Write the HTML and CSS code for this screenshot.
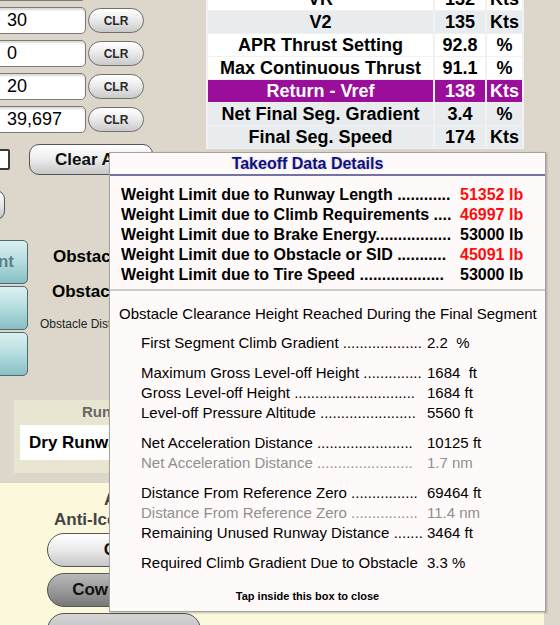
FILE: index.html
```html
<!DOCTYPE html>
<html lang="en">
<head>
    <meta charset="UTF-8">
    <meta name="viewport" content="width=device-width, initial-scale=1.0">
    <title>Takeoff Data</title>
    <link rel="stylesheet" href="styles.css">
</head>
<body>
    <div class="page">
        <div class="form">
            <div class="left">
                <div class="entry"><input class="field" value="5,200"><button class="clr">CLR</button></div>
                <div class="entry"><input class="field" value="30"><button class="clr">CLR</button></div>
                <div class="entry"><input class="field" value="0"><button class="clr">CLR</button></div>
                <div class="entry"><input class="field" value="20"><button class="clr">CLR</button></div>
                <div class="entry"><input class="field" value="39,697"><button class="clr">CLR</button></div>

                <div class="clear-row">
                    <span class="check"></span>
                    <button class="clear-all">Clear All</button>
                </div>

                <button class="stub"></button>

                <div class="obst">
                    <div class="teal-col">
                        <button class="teal">Segment</button>
                        <button class="teal"></button>
                        <button class="teal"></button>
                    </div>
                    <div class="obst-labels">
                        <div class="obst-big">Obstacle Height</div>
                        <div class="obst-big second">Obstacle Distance</div>
                        <div class="obst-small">Obstacle Distance from Runway End</div>
                    </div>
                </div>

                <div class="runway">
                    <div class="runway-label">Runway Condition</div>
                    <div class="runway-field">Dry Runway</div>
                </div>
            </div>

            <table class="perf">
                <colgroup>
                    <col class="c-label">
                    <col class="c-value">
                    <col class="c-unit">
                </colgroup>
                <tr class="light"><td>VR</td><td>132</td><td>Kts</td></tr>
                <tr class="gray"><td>V2</td><td>135</td><td>Kts</td></tr>
                <tr class="light"><td>APR Thrust Setting</td><td>92.8</td><td>%</td></tr>
                <tr class="light"><td>Max Continuous Thrust</td><td>91.1</td><td>%</td></tr>
                <tr class="hilite"><td>Return - Vref</td><td>138</td><td>Kts</td></tr>
                <tr class="gray"><td>Net Final Seg. Gradient</td><td>3.4</td><td>%</td></tr>
                <tr class="gray"><td>Final Seg. Speed</td><td>174</td><td>Kts</td></tr>
            </table>
        </div>

        <div class="anti-ice">
            <div class="ai-heading">Anti-Ice Settings</div>
            <div class="ai-label">Anti-Ice</div>
            <button class="pill">Cowl</button>
            <button class="pill on">Cowl &amp; Wing</button>
            <button class="pill dim"></button>
        </div>

        <div class="details">
            <div class="details-title">Takeoff Data Details</div>

            <div class="limits">
                <div class="limit"><span class="l-name">Weight Limit due to Runway Length ............</span><span class="l-val over">51352 lb</span></div>
                <div class="limit"><span class="l-name">Weight Limit due to Climb Requirements ....</span><span class="l-val over">46997 lb</span></div>
                <div class="limit"><span class="l-name">Weight Limit due to Brake Energy.................</span><span class="l-val">53000 lb</span></div>
                <div class="limit"><span class="l-name">Weight Limit due to Obstacle or SID ...........</span><span class="l-val over">45091 lb</span></div>
                <div class="limit"><span class="l-name">Weight Limit due to Tire Speed ...................</span><span class="l-val">53000 lb</span></div>
            </div>

            <div class="segment">
                <div class="seg-title">Obstacle Clearance Height Reached During the Final Segment</div>

                <div class="group">
                    <div class="item"><span class="i-name">First Segment Climb Gradient ...................</span><span class="i-val">2.2&nbsp; %</span></div>
                </div>
                <div class="group">
                    <div class="item"><span class="i-name">Maximum Gross Level-off Height ..............</span><span class="i-val">1684&nbsp; ft</span></div>
                    <div class="item"><span class="i-name">Gross Level-off Height .............................</span><span class="i-val">1684 ft</span></div>
                    <div class="item"><span class="i-name">Level-off Pressure Altitude .......................</span><span class="i-val">5560 ft</span></div>
                </div>
                <div class="group">
                    <div class="item"><span class="i-name">Net Acceleration Distance .......................</span><span class="i-val">10125 ft</span></div>
                    <div class="item faded"><span class="i-name">Net Acceleration Distance .......................</span><span class="i-val">1.7 nm</span></div>
                </div>
                <div class="group">
                    <div class="item"><span class="i-name">Distance From Reference Zero ................</span><span class="i-val">69464 ft</span></div>
                    <div class="item faded"><span class="i-name">Distance From Reference Zero ................</span><span class="i-val">11.4 nm</span></div>
                    <div class="item"><span class="i-name">Remaining Unused Runway Distance .......</span><span class="i-val">3464 ft</span></div>
                </div>
                <div class="group">
                    <div class="item"><span class="i-name">Required Climb Gradient Due to Obstacle</span><span class="i-val">3.3 %</span></div>
                </div>
            </div>

            <div class="close-hint">Tap inside this box to close</div>
        </div>
    </div>
</body>
</html>
```

FILE: styles.css
```css
body {
    margin: 0;
    padding: 0;
    background-color: #ddd7cb;
    font-family: "Liberation Sans", Arial, sans-serif;
    color: #000;
    overflow: hidden;
}

.page {
    position: relative;
    width: 560px;
    height: 625px;
    overflow: hidden;
}

button {
    font-family: inherit;
    padding: 0;
    cursor: pointer;
}

/* ---- top form ---- */

.form {
    display: flex;
    align-items: flex-start;
}

.left {
    width: 206px;
    display: flex;
    flex-direction: column;
    margin-top: -26px;
}

.entry {
    display: flex;
    align-items: center;
    gap: 2px;
    height: 27px;
    margin-bottom: 6px;
}

.field {
    box-sizing: border-box;
    width: 96px;
    height: 27px;
    margin: 0 0 0 -10px;
    padding: 0 0 0 16px;
    border: 1px solid #7d7a74;
    border-radius: 5px;
    background: #fff;
    box-shadow: inset 0 2px 2px rgba(0, 0, 0, 0.15);
    font: 18px "Liberation Sans", Arial, sans-serif;
    color: #000;
}

.clr {
    width: 56px;
    height: 25px;
    border: 1px solid #6f6f6f;
    border-radius: 13px;
    background: linear-gradient(#ffffff, #ececec 45%, #c9c9c9);
    font-size: 12px;
    font-weight: bold;
    color: #2a2a2a;
}

.clear-row {
    display: flex;
    align-items: center;
    height: 31px;
    margin-top: 5px;
}

.check {
    box-sizing: border-box;
    width: 22px;
    height: 21px;
    margin-left: -12px;
    border: 2px solid #3a3a3a;
    border-radius: 2px;
    background: #fff;
}

.clear-all {
    box-sizing: border-box;
    width: 124px;
    height: 31px;
    margin-left: 19px;
    padding-left: 25px;
    text-align: left;
    border: 1px solid #555;
    border-radius: 10px;
    background: linear-gradient(#ffffff, #eeeeee 45%, #c8c8c8);
    font-size: 17px;
    font-weight: bold;
    color: #111;
}

.stub {
    width: 60px;
    height: 30px;
    margin: 15px 0 0 -55px;
    border: 1px solid #555;
    border-radius: 9px;
    background: linear-gradient(#ffffff, #e6e6e6 50%, #c4c4c4);
}

.obst {
    display: flex;
    margin-top: 20px;
}

.teal-col {
    display: flex;
    flex-direction: column;
    gap: 2px;
}

.teal {
    box-sizing: border-box;
    display: flex;
    align-items: center;
    justify-content: flex-end;
    width: 100px;
    height: 44px;
    margin-left: -72px;
    padding-right: 13px;
    overflow: hidden;
    white-space: nowrap;
    border: 1px solid #4f6b70;
    border-radius: 5px;
    background: linear-gradient(#dcf1f1, #b4dcde 50%, #86bfc4);
    font-size: 17px;
    font-weight: bold;
    color: #5e8088;
}

.obst-labels {
    margin-left: 12px;
    white-space: nowrap;
}

.obst-big {
    font-size: 17px;
    font-weight: bold;
    line-height: 20px;
    margin: 7px 0 0 13px;
}

.obst-big.second {
    margin: 15px 0 0 12px;
}

.obst-small {
    font-size: 12px;
    line-height: 16px;
    margin-top: 14px;
    color: #222;
}

.runway {
    width: 194px;
    height: 73px;
    margin: 24px 0 0 14px;
    background: #e8e6d1;
    white-space: nowrap;
}

.runway-label {
    padding: 2px 0 0 68px;
    height: 23px;
    line-height: 20px;
    font-size: 15px;
    font-weight: bold;
    color: #666;
}

.runway-field {
    height: 35px;
    margin-left: 6px;
    padding-left: 9px;
    line-height: 35px;
    background: #fff;
    font-size: 17px;
    font-weight: bold;
}

/* ---- result table ---- */

.perf {
    table-layout: fixed;
    margin-top: -13px;
    border-spacing: 2px 1px;
    background: #f1f1f1;
}

.c-label { width: 225px; }
.c-value { width: 50px; }
.c-unit { width: 35px; }

.perf td {
    height: 22px;
    padding: 0;
    text-align: center;
    font-size: 18px;
    font-weight: bold;
    line-height: 22px;
    white-space: nowrap;
}

.perf .light td { background: #fff; }
.perf .gray td { background: #e9ecef; }
.perf .hilite td { background: #9b0d9b; color: #fff; }

/* ---- anti-ice area ---- */

.anti-ice {
    width: 544px;
    height: 142px;
    margin-top: 10px;
    padding-top: 7px;
    box-sizing: border-box;
    background: #fbf8dc;
    white-space: nowrap;
}

.ai-heading {
    padding-left: 104px;
    line-height: 20px;
    font-size: 17px;
    font-weight: bold;
    color: #444;
}

.ai-label {
    padding-left: 54px;
    line-height: 20px;
    font-size: 17px;
    font-weight: bold;
    color: #444;
}

.pill {
    display: block;
    width: 154px;
    height: 34px;
    margin: 3px 0 0 47px;
    border: 1px solid #555;
    border-radius: 17px;
    background: linear-gradient(#ffffff, #eaeaea 50%, #c6c6c6);
    font-size: 17px;
    font-weight: bold;
    color: #111;
}

.pill.on {
    margin-top: 6px;
    background: linear-gradient(#b9b9b9, #9a9a9a 50%, #787878);
}

.pill.dim {
    margin-top: 6px;
    background: linear-gradient(#d6d6d6, #b0b0b0);
}

/* ---- details popup ---- */

.details {
    position: absolute;
    left: 109px;
    top: 152px;
    width: 435px;
    height: 458px;
    border: 1px solid #a3a3a3;
    background: #fffafa;
    box-shadow: 1px 1px 2px rgba(0, 0, 0, 0.25);
}

.details-title {
    height: 21px;
    padding-right: 40px;
    line-height: 22px;
    text-align: center;
    border-bottom: 2px solid #7373a3;
    font-size: 16px;
    font-weight: bold;
    color: #10107e;
    text-shadow: 0 0 3px #c8c8d8;
}

.limits {
    padding: 9px 0 4px 11px;
    border-bottom: 2px solid #cbcbcb;
}

.limit {
    display: flex;
    height: 20px;
    line-height: 20px;
    font-size: 16px;
    font-weight: bold;
    white-space: nowrap;
}

.l-name {
    width: 339px;
    overflow: hidden;
}

.l-val {
    width: 62px;
    text-align: right;
}

.l-val.over {
    color: #ff0d0d;
}

.segment {
    padding: 13px 0 0 9px;
}

.seg-title {
    line-height: 20px;
    font-size: 15px;
    white-space: nowrap;
}

.group {
    margin-top: 9px;
    padding-left: 22px;
}

.group + .group {
    margin-top: 10px;
}

.item {
    display: flex;
    height: 20px;
    line-height: 20px;
    font-size: 15px;
    white-space: nowrap;
}

.i-name {
    width: 286px;
    overflow: hidden;
}

.item.faded {
    color: #8f8f8f;
}

.close-hint {
    margin-top: 15px;
    padding-right: 40px;
    text-align: center;
    line-height: 16px;
    font-size: 11px;
    font-weight: bold;
}
```
